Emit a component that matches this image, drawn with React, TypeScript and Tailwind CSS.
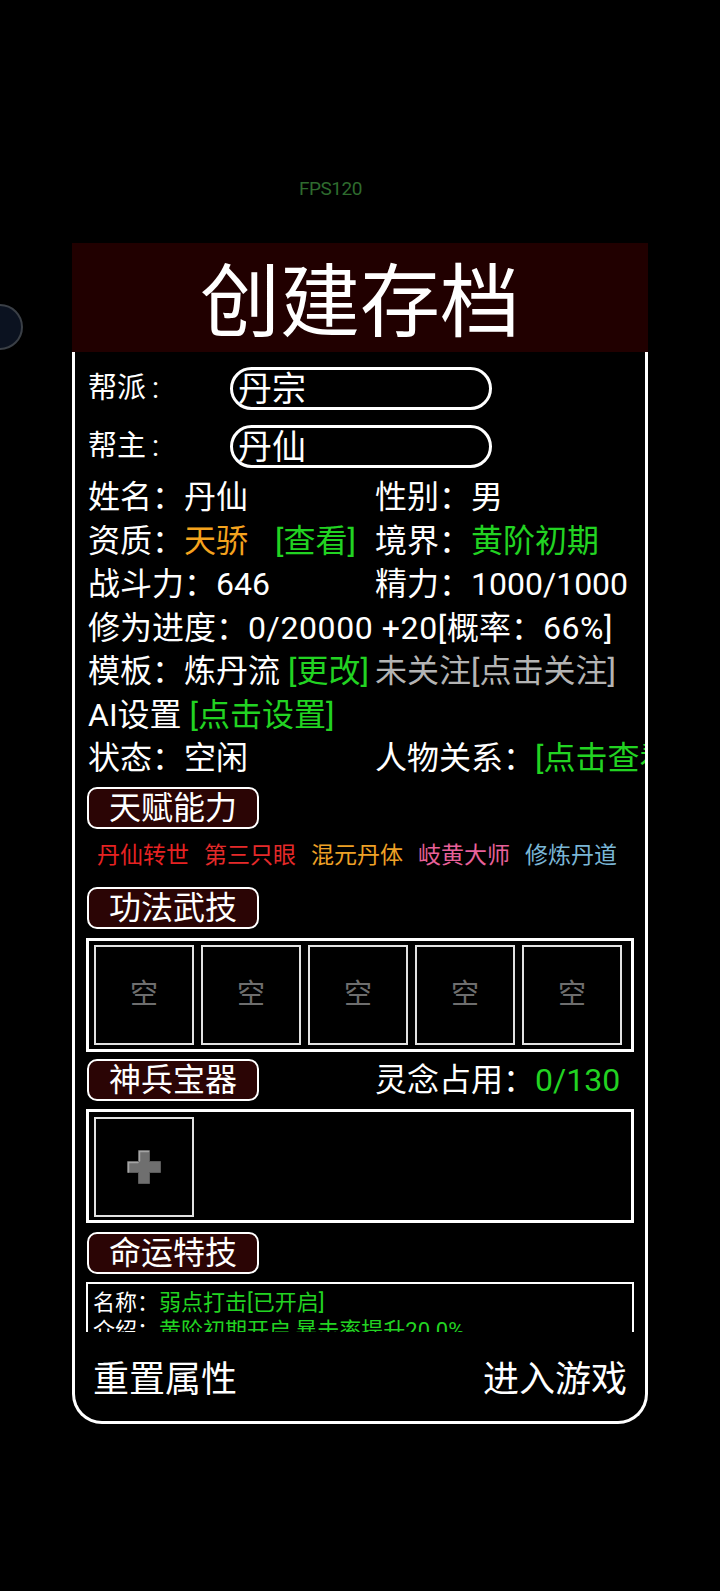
import React from 'react';

const GREEN = 'text-[#22d322]';

const SectionButton = ({ label }: { label: string }) => (
	<div className="w-[172px] h-[42px] rounded-[10px] border-2 border-white bg-[#2b0505] flex items-center justify-center text-[32px] leading-none text-white">
		{label}
	</div>
);

const Slot = ({ children }: { children?: React.ReactNode }) => (
	<div className="w-[100px] h-[100px] shrink-0 border-2 border-[#e2e2e2] flex items-center justify-center text-[28px] text-[#6e6e6e]">
		{children}
	</div>
);

const PlusIcon = () => (
	<svg width="40" height="40" viewBox="0 0 40 40">
		<path
			d="M14.5 3.5 h11 v11 h11 v11 h-11 v11 h-11 v-11 h-11 v-11 h11 z"
			fill="#6f6f6f"
			stroke="#5a5a5a"
			strokeWidth="1"
			strokeLinejoin="round"
		/>
		<path d="M15.5 14 v-9.5 h9" fill="none" stroke="#a4a4a4" strokeWidth="1.5" strokeLinecap="round" />
		<path d="M4.5 25 v-9.5 h9.5" fill="none" stroke="#a4a4a4" strokeWidth="1.5" strokeLinecap="round" />
	</svg>
);

const Input = ({ value }: { value: string }) => (
	<div className="w-[262px] h-[43px] rounded-full border-[3px] border-white flex items-center pl-[5px] text-[34px] leading-none text-white">
		{value}
	</div>
);

const Label = ({ text }: { text: string }) => (
	<div className="w-[142px] text-[29px]">
		{text}
		<span className="ml-[6px]">:</span>
	</div>
);

export default function App() {
	return (
		<div className="relative min-h-[1591px] bg-black overflow-hidden text-white [font-family:Roboto,'Noto_Sans_CJK_SC',sans-serif]">
			{/* side floating ball */}
			<div className="absolute left-[-23px] top-[304px] w-[46px] h-[46px] rounded-full border-2 border-[#3a3f46] bg-[#0b1220]" />

			<div className="pt-[179px] pl-[299px] h-[199px] text-[19px] leading-[20px] tracking-[-0.5px] text-[#2e6b2e]">FPS120</div>

			<div className="mt-[44px] mx-[72px] w-[576px]">
				<div className="h-[109px] pt-[10px] bg-[#210000] flex items-center justify-center text-[80px] leading-none text-white">
					创建存档
				</div>

				<div className="h-[1072px] border-x-[3px] border-b-[3px] border-white rounded-b-[30px] flex flex-col">
					<div className="h-[980px] overflow-hidden pl-[11px] pt-[15px] whitespace-nowrap">
						{/* 帮派 / 帮主 */}
						<div className="flex items-center h-[43px] pl-[2px]">
							<Label text="帮派" />
							<Input value="丹宗" />
						</div>
						<div className="flex items-center h-[43px] mt-[15px] pl-[2px]">
							<Label text="帮主" />
							<Input value="丹仙" />
						</div>

						{/* info grid */}
						<div className="mt-[8px] pl-[2px] grid grid-cols-[287px_auto] text-[32px] leading-[43.5px]">
							<div>姓名：丹仙</div>
							<div>性别：男</div>

							<div>
								资质：<span className="text-[#f5a31e]">天骄</span>
								<span className={`${GREEN} ml-[27px]`}>[查看]</span>
							</div>
							<div>
								境界：<span className={GREEN}>黄阶初期</span>
							</div>

							<div>战斗力：646</div>
							<div>精力：1000/1000</div>

							<div className="col-span-2">
								修为进度：<span className="tracking-[0.6px]">0/20000 +20[</span>概率：
								<span className="tracking-[0.6px]">66%]</span>
							</div>

							<div>
								模板：炼丹流 <span className={GREEN}>[更改]</span>
							</div>
							<div className="text-[#b4b4b4]">未关注[点击关注]</div>

							<div className="col-span-2">
								AI设置 <span className={GREEN}>[点击设置]</span>
							</div>

							<div>状态：空闲</div>
							<div>
								人物关系：<span className={GREEN}>[点击查看]</span>
							</div>
						</div>

						{/* 天赋能力 */}
						<div className="mt-[6px] pl-[1px]">
							<SectionButton label="天赋能力" />
						</div>
						<div className="mt-[13px] h-[30px] pl-[11px] flex items-center gap-[15px] text-[23px]">
							<span className="text-[#e52222]">丹仙转世</span>
							<span className="text-[#e52a2a]">第三只眼</span>
							<span className="text-[#eea126]">混元丹体</span>
							<span className="text-[#e8619a]">岐黄大师</span>
							<span className="text-[#7ab6d6]">修炼丹道</span>
						</div>

						{/* 功法武技 */}
						<div className="mt-[15px] pl-[1px]">
							<SectionButton label="功法武技" />
						</div>
						<div className="mt-[9px] w-[548px] h-[114px] border-[3px] border-white flex gap-[7px] pt-[4px] pl-[5px]">
							<Slot>空</Slot>
							<Slot>空</Slot>
							<Slot>空</Slot>
							<Slot>空</Slot>
							<Slot>空</Slot>
						</div>

						{/* 神兵宝器 */}
						<div className="mt-[7px] pl-[1px] grid grid-cols-[288px_auto] items-center">
							<SectionButton label="神兵宝器" />
							<div className="text-[32px] leading-none">
								灵念占用：<span className={GREEN}>0/130</span>
							</div>
						</div>
						<div className="mt-[8px] w-[548px] h-[114px] border-[3px] border-white flex pt-[5px] pl-[5px]">
							<Slot>
								<PlusIcon />
							</Slot>
						</div>

						{/* 命运特技 */}
						<div className="mt-[9px] pl-[1px]">
							<SectionButton label="命运特技" />
						</div>
						<div className="mt-[8px] w-[548px] h-[120px] border-2 border-white pt-[5px] pl-[5px] text-[22px] leading-[28px]">
							<div>
								名称：<span className={GREEN}>弱点打击[已开启]</span>
							</div>
							<div>
								介绍：<span className={GREEN}>黄阶初期开启,暴击率提升20.0%</span>
							</div>
						</div>
					</div>

					{/* footer actions */}
					<div className="flex-1 flex items-center justify-between pt-[7px] px-[18px] text-[36px] leading-none">
						<span>重置属性</span>
						<span>进入游戏</span>
					</div>
				</div>
			</div>
		</div>
	);
}
